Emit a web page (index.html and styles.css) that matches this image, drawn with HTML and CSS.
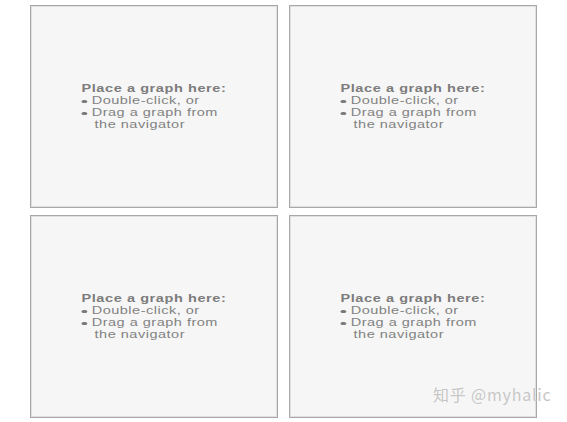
FILE: index.html
```html
<!DOCTYPE html>
<html>
<head>
<meta charset="utf-8">
<link rel="stylesheet" href="styles.css">
</head>
<body>
<div class="grid">
  <div class="panel">
    <div class="hint">
      <div class="title">Place a graph here:</div>
      <div class="item"><span class="dash"></span><span>Double-click, or</span></div>
      <div class="item"><span class="dash"></span><span>Drag a graph from</span></div>
      <div class="cont">the navigator</div>
    </div>
  </div>
  <div class="panel">
    <div class="hint">
      <div class="title">Place a graph here:</div>
      <div class="item"><span class="dash"></span><span>Double-click, or</span></div>
      <div class="item"><span class="dash"></span><span>Drag a graph from</span></div>
      <div class="cont">the navigator</div>
    </div>
  </div>
  <div class="panel">
    <div class="hint">
      <div class="title">Place a graph here:</div>
      <div class="item"><span class="dash"></span><span>Double-click, or</span></div>
      <div class="item"><span class="dash"></span><span>Drag a graph from</span></div>
      <div class="cont">the navigator</div>
    </div>
  </div>
  <div class="panel">
    <div class="hint">
      <div class="title">Place a graph here:</div>
      <div class="item"><span class="dash"></span><span>Double-click, or</span></div>
      <div class="item"><span class="dash"></span><span>Drag a graph from</span></div>
      <div class="cont">the navigator</div>
    </div>
  </div>
</div>
<div class="watermark">知乎 @myhalic</div>
</body>
</html>
```
FILE: styles.css
```css
html, body {
  margin: 0;
  padding: 0;
  background: #ffffff;
  width: 567px;
  height: 422px;
  overflow: hidden;
}
body {
  position: relative;
  font-family: "Liberation Sans", Arial, sans-serif;
}
.grid {
  display: grid;
  grid-template-columns: 248px 248px;
  grid-template-rows: 203px 203px;
  column-gap: 11px;
  row-gap: 7px;
  padding: 5px 0 0 30px;
}
.panel {
  box-sizing: border-box;
  border: 1px solid #a8a8a8;
  box-shadow: inset 0 0 0 1px #e0e0e0;
  background: #f6f6f6;
  display: flex;
  align-items: center;
  justify-content: center;
}
.hint {
  width: 100px;
  transform: scaleX(1.45);
  transform-origin: center center;
  color: #828282;
  font-size: 10px;
  line-height: 12px;
  white-space: nowrap;
  letter-spacing: 0.35px;
}
.title {
  font-weight: bold;
  letter-spacing: 0.4px;
  color: #7c7c7c;
}
.item {
  display: flex;
  align-items: center;
}
.dash {
  display: inline-block;
  width: 3.5px;
  height: 3px;
  background: #7a7a7a;
  border-radius: 1.5px;
  margin: 1px 3.5px 0 0;
}
.cont {
  padding-left: 9px;
}
.watermark {
  position: absolute;
  left: 433px;
  top: 384px;
  font-family: "Noto Sans CJK SC", "Liberation Sans", sans-serif;
  font-size: 16px;
  line-height: 20px;
  letter-spacing: 0.8px;
  color: #c6c6c6;
  text-shadow: 0 0 1px #ffffff;
  white-space: nowrap;
}
```
